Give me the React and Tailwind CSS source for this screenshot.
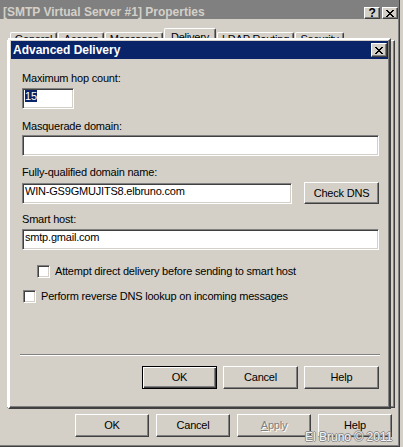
import React from "react";

const raised =
  "border border-t-white border-l-white border-r-[#404040] border-b-[#404040] shadow-[inset_-1px_-1px_#808080]";
const sunken =
  "border border-t-[#808080] border-l-[#808080] border-r-white border-b-white shadow-[inset_1px_1px_#404040,inset_-1px_-1px_#d4d0c8]";

const Button = ({ children, className = "text-black", isDefault }) => (
  <button
    type="button"
    className={`flex items-center justify-center leading-[13px] ${
      isDefault
        ? "border border-black shadow-[inset_1px_1px_#fff,inset_-1px_-1px_#404040,inset_-2px_-2px_#808080]"
        : raised
    } ${className}`}
  >
    {children}
  </button>
);

const Input = ({ children, className = "" }) => (
  <div className={`h-[21px] bg-white pl-[2px] pt-[1px] leading-[13px] ${sunken} ${className}`}>
    {children}
  </div>
);

const Checkbox = ({ label, className = "" }) => (
  <div className={`flex items-center h-[13px] ${className}`}>
    <div className={`w-[13px] h-[13px] bg-white ${sunken}`} />
    <span className="ml-[5px] leading-[13px]">{label}</span>
  </div>
);

const CaptionButton = ({ children, className = "" }) => (
  <div className={`flex items-center justify-center bg-[#d4d0c8] ${raised} ${className}`}>
    {children}
  </div>
);

const CloseGlyph = () => (
  <svg width="8" height="7" viewBox="0 0 8 7" shapeRendering="crispEdges">
    <path d="M0 0h2v1h-2zM6 0h2v1h-2zM1 1h2v1h-2zM5 1h2v1h-2zM2 2h4v1h-4zM3 3h2v1h-2zM2 4h4v1h-4zM1 5h2v1h-2zM5 5h2v1h-2zM0 6h2v1h-2zM6 6h2v1h-2z" fill="#000" />
  </svg>
);

const tabs = [
  { label: "General", w: "w-[47px]" },
  { label: "Access", w: "w-[46px]" },
  { label: "Messages", w: "w-[58px]" },
  { label: "Delivery", w: "w-[52px]", selected: true },
  { label: "LDAP Routing", w: "w-[77px]" },
  { label: "Security", w: "w-[49px]" },
];

export default function App() {
  return (
    <div className="relative w-[403px] h-[447px] overflow-hidden bg-[#d4d0c8] font-['Liberation_Sans',Arial,sans-serif] text-[11px] tracking-[-0.2px] text-black">
      {/* properties window */}
      <div className="flex flex-col w-[400px] h-[447px] border-r border-b border-r-[#404040] border-b-[#404040] shadow-[inset_-1px_-1px_#808080] pr-[1px]">
        <div className="flex items-start justify-between h-[19px] bg-[#808080]">
          <span className="ml-[3px] mt-[5px] text-[12px] leading-[14px] font-bold tracking-normal text-[#d4d0c8]">
            [SMTP Virtual Server #1] Properties
          </span>
          <div className="flex gap-[2px] mt-[7px]">
            <CaptionButton className="w-[16px] h-[12px]">
              <span className="text-[12px] leading-[10px] font-bold">?</span>
            </CaptionButton>
            <CaptionButton className="w-[16px] h-[12px]">
              <CloseGlyph />
            </CaptionButton>
          </div>
        </div>

        <div className="flex items-end gap-[1px] h-[12px] mt-[9px] pl-[10px]">
          {tabs.map((t) => (
            <div
              key={t.label}
              className={`flex justify-center whitespace-nowrap border-t border-l border-r border-t-white border-l-white border-r-[#404040] shadow-[inset_-1px_0_#808080] rounded-t-[2px] leading-[13px] ${t.w} ${
                t.selected ? "h-[12px] pt-[2px]" : "h-[8px]"
              }`}
            >
              {t.label}
            </div>
          ))}
        </div>

        <div className="ml-[7px] w-[388px] h-[368px] border-t border-l border-r border-b border-t-white border-l-white border-r-[#404040] border-b-[#404040] shadow-[inset_-1px_-1px_#808080]" />

        <div className="flex justify-end gap-[7px] mt-[6px] pr-[6px]">
          <Button className="w-[74px] h-[23px] text-black">OK</Button>
          <Button className="w-[74px] h-[23px] text-black">Cancel</Button>
          <Button className="w-[74px] h-[23px] text-[#808080] [text-shadow:1px_1px_#fff]">
            <span>
              <span className="underline">A</span>pply
            </span>
          </Button>
          <Button className="w-[74px] h-[23px] text-black">Help</Button>
        </div>
      </div>

      {/* Advanced Delivery dialog, floating over the properties window */}
      <div className="absolute left-[8px] top-[38px] w-[383px] h-[371px] flex flex-col bg-[#d4d0c8] border-2 border-t-white border-l-white border-r-[#404040] border-b-[#404040] shadow-[inset_-1px_-1px_#808080] p-[1px]">
        <div className="flex items-center justify-between h-[18px] bg-[#0a246a] pl-[2px] pr-[1px]">
          <span className="text-[12px] leading-[14px] font-bold tracking-normal text-white">
            Advanced Delivery
          </span>
          <CaptionButton className="w-[16px] h-[14px]">
            <CloseGlyph />
          </CaptionButton>
        </div>

        <div className="flex flex-col pl-[11px]">
          <div className="mt-[13px] h-[13px] leading-[13px]">Maximum hop count:</div>
          <Input className="mt-[3px] w-[52px]">
            <span className="bg-[#0a246a] text-white">15</span>
          </Input>

          <div className="mt-[11px] h-[13px] leading-[13px]">Masquerade domain:</div>
          <Input className="mt-[2px] w-[357px]" />

          <div className="mt-[10px] h-[13px] leading-[13px]">Fully-qualified domain name:</div>
          <div className="flex items-start justify-between w-[357px] mt-[3px]">
            <Input className="mt-[1px] w-[270px]">WIN-GS9GMUJITS8.elbruno.com</Input>
            <Button className="w-[75px] h-[22px] text-black">Check DNS</Button>
          </div>

          <div className="mt-[9px] h-[13px] leading-[13px]">Smart host:</div>
          <Input className="mt-[3px] w-[357px]">smtp.gmail.com</Input>

          <Checkbox
            className="mt-[15px] ml-[15px]"
            label="Attempt direct delivery before sending to smart host"
          />
          <Checkbox
            className="mt-[12px] ml-[1px]"
            label="Perform reverse DNS lookup on incoming messages"
          />

          <div className="mt-[51px] -ml-[2px] w-[360px] h-[2px] border-t border-b border-t-[#808080] border-b-white" />

          <div className="flex justify-end gap-[6px] w-[357px] mt-[10px]">
            <Button isDefault className="w-[75px] h-[23px] text-black">OK</Button>
            <Button className="w-[75px] h-[23px] text-black">Cancel</Button>
            <Button className="w-[75px] h-[23px] text-black">Help</Button>
          </div>
        </div>
      </div>

      <span className="absolute left-[305px] top-[430px] text-[12px] leading-[14px] tracking-normal text-[#f4f4f4] [text-shadow:1px_0_#8a8a8a,-1px_0_#8a8a8a,0_1px_#8a8a8a,0_-1px_#8a8a8a]">
        El Bruno © 2011
      </span>
    </div>
  );
}
